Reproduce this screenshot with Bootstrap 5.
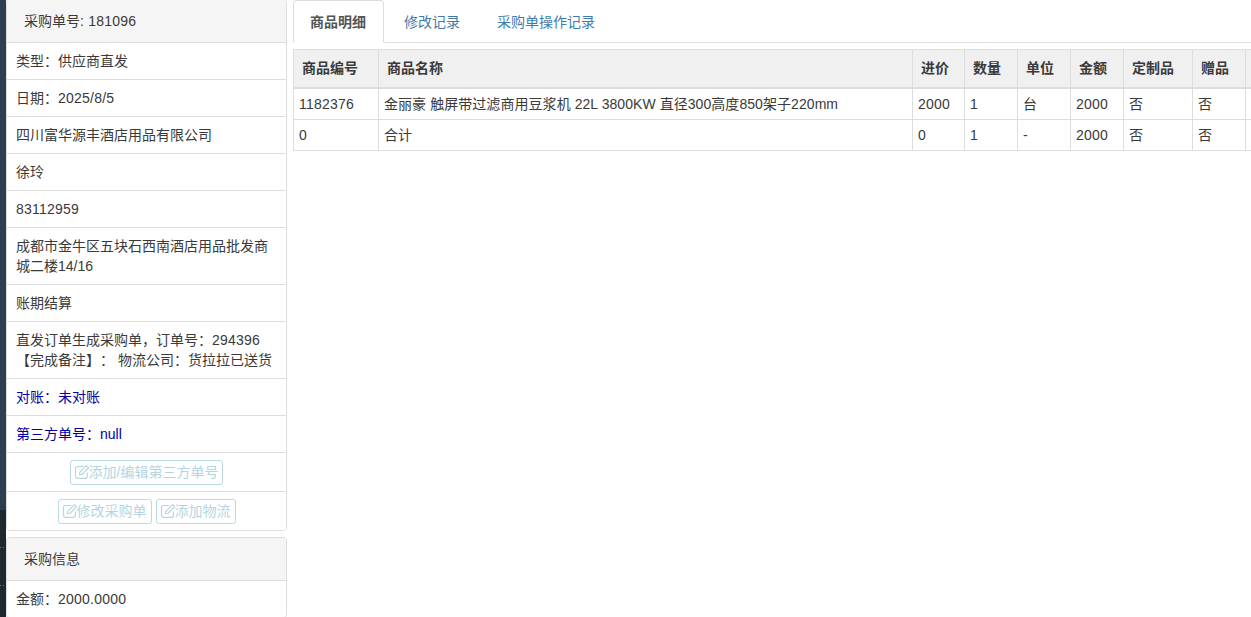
<!DOCTYPE html>
<html lang="zh">
<head>
<meta charset="utf-8">
<title>采购单</title>
<link href="https://cdn.jsdelivr.net/npm/bootstrap@5.3.0/dist/css/bootstrap.min.css" rel="stylesheet">
<style>
html,body{height:617px;overflow:hidden;margin:0;background:#fff}
body{font-family:"Liberation Sans","Noto Sans CJK SC",sans-serif;font-size:14px;line-height:20px;color:#3a3a3a;text-spacing-trim:space-all}
.page-wrap{height:617px}
.num-run{letter-spacing:.22px}
.name-cell{letter-spacing:.06px}
.edge-strip{width:6px;flex:none;background:#20282f}
.edge-top{height:510px;background:#2d3e50}
.edge-dot{height:1px;margin-top:37px;width:4px;background-image:linear-gradient(90deg,#6b7278 50%,transparent 50%);background-size:3px 1px}
.edge-dot:first-of-type{margin-top:38px}
.side-col{width:281px;flex:none;margin-right:6px}
.side-card{--bs-card-border-color:#ddd;--bs-card-border-radius:4px;--bs-card-inner-border-radius:3px;margin-bottom:6px;font-size:14px}
.side-card:first-child{margin-top:-1px}
.side-card .card-header{padding:11px 16px 11px 17px;background:#f5f5f5;border-bottom:1px solid #ddd;line-height:20px;color:#3a3a3a}
.side-card .list-group-item{padding:8px 9px;line-height:20px;color:#3a3a3a;border-color:#ddd}
.side-card .list-group-item.mark-blue{color:#0000a8}
.side-card .list-group-item.btn-row{padding:7px 4px 6px;gap:4px;display:flex;justify-content:center}
.soft-btn{--bs-btn-padding-x:4px;--bs-btn-padding-y:0;--bs-btn-font-size:14px;--bs-btn-line-height:20px;--bs-btn-border-radius:3px;--bs-btn-disabled-color:#b4d5df;--bs-btn-disabled-border-color:#bcdae3;--bs-btn-disabled-bg:#fff;--bs-btn-disabled-opacity:1;display:inline-flex;align-items:flex-start;height:25px;padding-top:1px;font-family:inherit}
.soft-btn svg{width:14px;height:14px;flex:none;margin-top:3px;fill:none;stroke:currentColor;stroke-width:1.15;stroke-linejoin:round;stroke-linecap:round}
.main-col{min-width:0;flex:1 1 auto;overflow:hidden}
.tab-bar{--bs-nav-tabs-border-color:#ddd;--bs-nav-tabs-border-radius:4px;--bs-nav-tabs-link-active-color:#555;--bs-nav-tabs-link-active-border-color:#ddd #ddd #fff;--bs-nav-link-color:#3f7cac;--bs-nav-link-padding-x:16px;--bs-nav-link-padding-y:11px;--bs-nav-link-font-size:14px;flex-wrap:nowrap;height:43px}
.tab-bar .nav-item{margin-right:3px}
.tab-bar .nav-link{line-height:20px;height:43px;white-space:nowrap}
.tab-bar .nav-link.active{font-weight:700;padding-right:17px}
.goods-table{width:1040px;table-layout:fixed;margin:6px 0 0;--bs-table-border-color:#ddd;--bs-table-color:#3a3a3a;font-size:14px;border-color:#ddd}
.goods-table th{padding:8px 8px 9px;line-height:20px;font-weight:700;--bs-table-bg:#f0f0f0;background:#f0f0f0;border-bottom:2px solid #ddd;white-space:nowrap}
.goods-table td{padding:5px;line-height:20px;white-space:nowrap}
.c-a{width:85px}.c-b{width:534px}.c-c{width:52px}.c-d{width:53px}.c-e{width:53px}.c-f{width:53px}.c-g{width:69px}.c-h{width:53px}.c-i{width:88px}
</style>
</head>
<body>
<div class="page-wrap d-flex">
  <div class="edge-strip">
    <div class="edge-top"></div>
    <div class="edge-dot"></div>
    <div class="edge-dot"></div>
  </div>
  <div class="side-col">
    <div class="card side-card">
      <div class="card-header">采购单号<span class="num-run">: 181096</span></div>
      <ul class="list-group list-group-flush">
        <li class="list-group-item">类型：供应商直发</li>
        <li class="list-group-item">日期：<span class="num-run">2025/8/5</span></li>
        <li class="list-group-item">四川富华源丰酒店用品有限公司</li>
        <li class="list-group-item">徐玲</li>
        <li class="list-group-item"><span class="num-run">83112959</span></li>
        <li class="list-group-item">成都市金牛区五块石西南酒店用品批发商城二楼14/16</li>
        <li class="list-group-item">账期结算</li>
        <li class="list-group-item">直发订单生成采购单，订单号：<span class="num-run">294396</span><br>【完成备注】： 物流公司：货拉拉已送货</li>
        <li class="list-group-item mark-blue">对账：未对账</li>
        <li class="list-group-item mark-blue">第三方单号：null</li>
        <li class="list-group-item btn-row">
          <button class="btn soft-btn" disabled type="button"><svg viewBox="1 1 14.200 14.200"><path d="M13.500 9v3.500a2 2 0 0 1-2 2h-8a2 2 0 0 1-2-2v-8a2 2 0 0 1 2-2H9"/><path d="M6 8.200 12.600 1.600l2.200 2.200L8.200 10.400 5.500 10.900z"/></svg>添加/编辑第三方单号</button>
        </li>
        <li class="list-group-item btn-row">
          <button class="btn soft-btn" disabled type="button"><svg viewBox="1 1 14.200 14.200"><path d="M13.500 9v3.500a2 2 0 0 1-2 2h-8a2 2 0 0 1-2-2v-8a2 2 0 0 1 2-2H9"/><path d="M6 8.200 12.600 1.600l2.200 2.200L8.200 10.400 5.500 10.900z"/></svg>修改采购单</button>
          <button class="btn soft-btn" disabled type="button"><svg viewBox="1 1 14.200 14.200"><path d="M13.500 9v3.500a2 2 0 0 1-2 2h-8a2 2 0 0 1-2-2v-8a2 2 0 0 1 2-2H9"/><path d="M6 8.200 12.600 1.600l2.200 2.200L8.200 10.400 5.500 10.900z"/></svg>添加物流</button>
        </li>
      </ul>
    </div>
    <div class="card side-card">
      <div class="card-header">采购信息</div>
      <ul class="list-group list-group-flush">
        <li class="list-group-item">金额：<span class="num-run">2000.0000</span></li>
      </ul>
    </div>
  </div>
  <div class="main-col">
    <ul class="nav nav-tabs tab-bar">
      <li class="nav-item"><a class="nav-link active" href="#">商品明细</a></li>
      <li class="nav-item"><a class="nav-link" href="#">修改记录</a></li>
      <li class="nav-item"><a class="nav-link" href="#">采购单操作记录</a></li>
    </ul>
    <table class="table table-bordered goods-table">
      <colgroup><col class="c-a"><col class="c-b"><col class="c-c"><col class="c-d"><col class="c-e"><col class="c-f"><col class="c-g"><col class="c-h"><col class="c-i"></colgroup>
      <thead>
        <tr><th>商品编号</th><th>商品名称</th><th>进价</th><th>数量</th><th>单位</th><th>金额</th><th>定制品</th><th>赠品</th><th></th></tr>
      </thead>
      <tbody>
        <tr><td class="num-run">1182376</td><td class="name-cell">金丽豪 触屏带过滤商用豆浆机 22L 3800KW 直径300高度850架子220mm</td><td class="num-run">2000</td><td>1</td><td>台</td><td class="num-run">2000</td><td>否</td><td>否</td><td></td></tr>
        <tr><td>0</td><td>合计</td><td>0</td><td>1</td><td>-</td><td class="num-run">2000</td><td>否</td><td>否</td><td></td></tr>
      </tbody>
    </table>
  </div>
</div>
<script src="https://cdn.jsdelivr.net/npm/bootstrap@5.3.0/dist/js/bootstrap.bundle.min.js"></script>
</body>
</html>
